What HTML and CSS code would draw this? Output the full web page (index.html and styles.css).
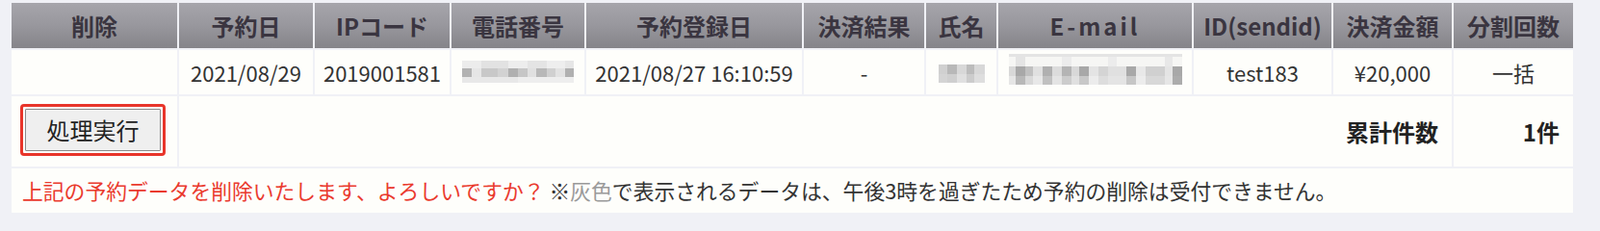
FILE: index.html
```html
<!DOCTYPE html>
<html lang="ja">
<head>
<meta charset="utf-8">
<title>予約削除</title>
<link rel="stylesheet" href="styles.css">
</head>
<body>
<table class="list">
  <colgroup>
    <col class="c1"><col class="c2"><col class="c3"><col class="c4"><col class="c5"><col class="c6"><col class="c7"><col class="c8"><col class="c9"><col class="c10"><col class="c11">
  </colgroup>
  <thead>
    <tr>
      <th>削除</th>
      <th>予約日</th>
      <th>IPコード</th>
      <th>電話番号</th>
      <th>予約登録日</th>
      <th>決済結果</th>
      <th>氏名</th>
      <th class="mail-head">E-mail</th>
      <th>ID(sendid)</th>
      <th>決済金額</th>
      <th>分割回数</th>
    </tr>
  </thead>
  <tbody>
    <tr class="row-data">
      <td></td>
      <td>2021/08/29</td>
      <td>2019001581</td>
      <td><span class="blur blur-tel"></span></td>
      <td>2021/08/27 16:10:59</td>
      <td>-</td>
      <td><span class="blur blur-name"></span></td>
      <td><span class="blur blur-mail"></span></td>
      <td>test183</td>
      <td>¥20,000</td>
      <td>一括</td>
    </tr>
    <tr class="row-total">
      <td class="btn-cell"><span class="mark"><button class="btn" type="button">処理実行</button></span></td>
      <td colspan="9" class="total-label">累計件数</td>
      <td class="total-val">1件</td>
    </tr>
    <tr class="row-note">
      <td colspan="11"><span class="warn">上記の予約データを削除いたします、よろしいですか？</span> ※<span class="gray">灰色</span>で表示されるデータは、午後3時を過ぎたため予約の削除は受付できません。</td>
    </tr>
  </tbody>
</table>
</body>
</html>
```
FILE: styles.css
```css
html, body {
  margin: 0;
  padding: 0;
  background: #f0f1f6;
}
body {
  padding: 1px 0 0 10px;
  font-family: "Noto Sans CJK JP", "Noto Sans", sans-serif;
  color: #333;
}
.list {
  table-layout: fixed;
  width: 1626px;
  border-collapse: separate;
  border-spacing: 2px;
}
.c1 { width: 172px; }
.c2 { width: 139px; }
.c3 { width: 140px; }
.c4 { width: 138px; }
.c5 { width: 224px; }
.c6 { width: 125px; }
.c7 { width: 73px; }
.c8 { width: 201px; }
.c9 { width: 143px; }
.c10 { width: 123px; }
.c11 { width: 124px; }

.list th {
  height: 47px;
  padding: 0;
  background: linear-gradient(to bottom, #a6a5ab 0%, #98979d 50%, #858489 100%);
  color: #3a3540;
  font-size: 24px;
  font-weight: 700;
  line-height: 1;
  text-align: center;
  vertical-align: middle;
  white-space: nowrap;
}
.list th.mail-head {
  letter-spacing: 3px;
}
.list td {
  padding: 0;
  background: #fefefb;
  vertical-align: middle;
  white-space: nowrap;
}
.row-data td {
  height: 46px;
  font-size: 22px;
  line-height: 1;
  text-align: center;
  color: #333;
}
.row-total td {
  height: 73px;
}
.btn-cell {
  padding-left: 9px !important;
}
.mark {
  display: inline-flex;
  padding: 2px;
  border: 3px solid #e8352a;
  border-radius: 4px;
  margin-top: -4px;
}
.btn {
  width: 141px;
  height: 44px;
  margin: 0;
  padding: 0;
  border: 1px solid #8a8a8a;
  border-radius: 1px;
  background: #efefef;
  font-family: "Noto Sans CJK JP", sans-serif;
  font-size: 24px;
  line-height: 1;
  color: #222;
}
.total-label,
.total-val {
  text-align: right;
  font-size: 24px;
  font-weight: 700;
  color: #222;
  padding-right: 14px !important;
  line-height: 1;
}
.row-note td {
  height: 46px;
  padding-left: 11px;
  font-size: 21.8px;
  line-height: 1;
  color: #333;
}
.warn { color: #ea3a2e; }
.gray { color: #9a9a9a; }

.blur {
  display: inline-block;
  vertical-align: middle;
  background-repeat: no-repeat;
}
.blur-tel {
  width: 116px;
  height: 23px;
  margin-top: -8px;
  background-image:
    linear-gradient(to right,
      #ececec 0 20px, #e2e2e2 20px 48px, #ededed 48px 68px, #e4e4e4 68px 88px, #eeeeee 88px 107px, #e6e6e6 107px 116px),
    linear-gradient(to right,
      #b2b2b2 0 10px, #e6e6e6 10px 20px, #c8c8c8 20px 37px, #d2d2d2 37px 48px,
      #b0b0b0 48px 58px, #c6c6c6 58px 68px, #e0e0e0 68px 77px, #b8b8b8 77px 88px,
      #d0d0d0 88px 97px, #e2e2e2 97px 107px, #b0b0b0 107px 116px),
    linear-gradient(to right, #e8e8e8 0 58px, #eeeeee 58px 116px);
  background-size: 116px 8px, 116px 9px, 116px 6px;
  background-position: 0 0, 0 8px, 0 17px;
}
.blur-name {
  width: 48px;
  height: 19px;
  margin-top: -4px;
  background-image:
    linear-gradient(to right,
      #d0d0d0 0 9px, #b8b8b8 9px 19px, #d8d8d8 19px 29px, #bcbcbc 29px 37px, #d8d8d8 37px 48px),
    linear-gradient(to right,
      #d4d4d4 0 9px, #cfcfcf 9px 19px, #e0e0e0 19px 29px, #cccccc 29px 37px, #dedede 37px 48px);
  background-size: 48px 10px, 48px 9px;
  background-position: 0 0, 0 10px;
}
.blur-mail {
  width: 180px;
  height: 32px;
  margin-top: -10px;
  background-image:
    linear-gradient(to right, #e4e4e4 0 180px),
    linear-gradient(to right,
      #f6f6f4 0 7px, #e4e4e4 7px 17px, #f6f6f4 17px 55px, #ececec 55px 65px,
      #f6f6f4 65px 103px, #ececec 103px 112px, #f6f6f4 112px 162px, #e8e8e8 162px 170px, #f6f6f4 170px 180px),
    linear-gradient(to right,
      #d8d8d8 0 7px, #a8a8a8 7px 17px, #c0c0c0 17px 25px, #e0e0e0 25px 35px,
      #b0b0b0 35px 45px, #dcdcdc 45px 55px, #b4b4b4 55px 65px, #d8d8d8 65px 73px,
      #a8a8a8 73px 83px, #e4e4e4 83px 93px, #d4d4d4 93px 103px, #e0e0e0 103px 122px,
      #a8a8a8 122px 132px, #e8e8e8 132px 142px, #d0d0d0 142px 162px, #e4e4e4 162px 170px,
      #a8a8a8 170px 180px),
    linear-gradient(to right,
      #e6e6e6 0 7px, #b8b8b8 7px 17px, #d8d8d8 17px 25px, #e8e8e8 25px 35px,
      #c0c0c0 35px 45px, #e4e4e4 45px 55px, #cccccc 55px 65px, #e0e0e0 65px 73px,
      #c8c8c8 73px 83px, #ececec 83px 93px, #dddddd 93px 103px, #e4e4e4 103px 122px,
      #c6c6c6 122px 132px, #ececec 132px 142px, #d8d8d8 142px 162px, #e6e6e6 162px 170px,
      #acacac 170px 180px);
  background-size: 180px 3px, 180px 10px, 180px 10px, 180px 9px;
  background-position: 0 0, 0 3px, 0 13px, 0 23px;
}
```
